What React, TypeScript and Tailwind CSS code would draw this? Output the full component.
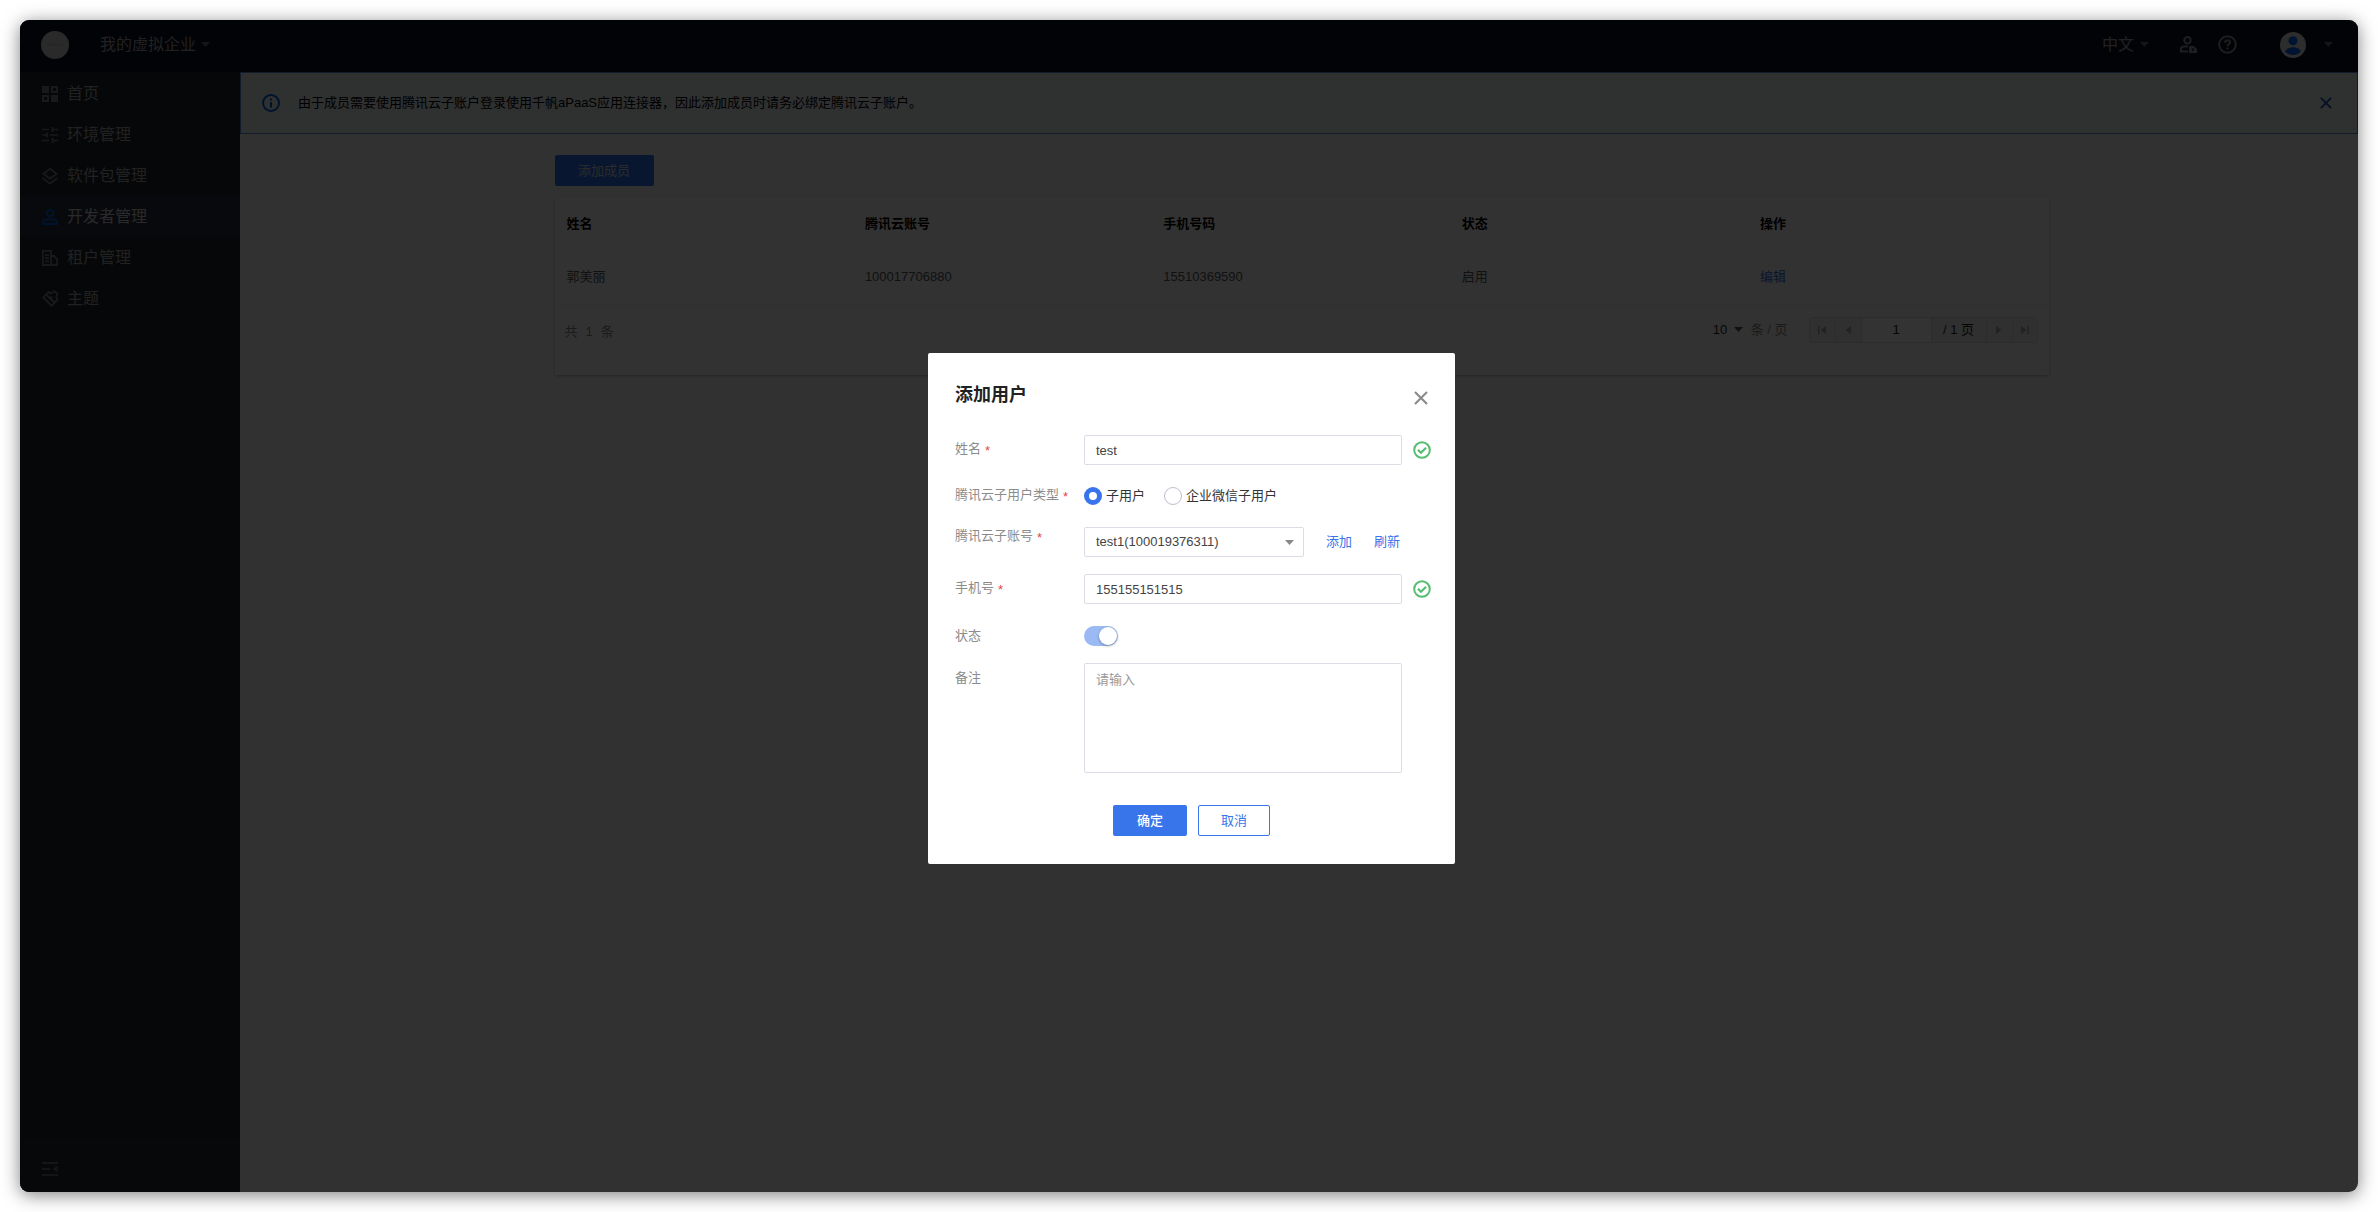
import type { ReactNode } from 'react';

type IconProps = { className?: string };

function Caret({ className = '' }: IconProps) {
  return (
    <svg className={`h-[5px] w-[9px] ${className}`} viewBox="0 0 10 6" preserveAspectRatio="none" fill="currentColor" aria-hidden="true">
      <path d="M0 0h10L5 6z" />
    </svg>
  );
}

function HomeIcon() {
  return (
    <svg className="size-4" viewBox="0 0 16 16" fill="none" stroke="currentColor" strokeWidth="2" aria-hidden="true">
      <path d="M0 0h7v7H0zM9 9h7v7H9z" fill="currentColor" stroke="none" />
      <path d="M10 1h5v5h-5zM1 10h5v5H1z" />
    </svg>
  );
}

function EnvIcon() {
  return (
    <svg className="size-4" viewBox="0 0 16 16" fill="none" stroke="currentColor" strokeWidth="1.7" aria-hidden="true">
      <path d="M0 2.500h7M10.500 2.500H16M10.500 0v5M0 8h5M5 5.500v5M8 8h8M0 13.500h7M10.500 13.500H16M10.500 11v5" />
    </svg>
  );
}

function LayersIcon() {
  return (
    <svg className="size-4" viewBox="0 0 16 16" fill="none" stroke="currentColor" strokeWidth="1.8" aria-hidden="true">
      <path d="M8 0.800l6.500 5L8 10.800 1.500 5.800z" />
      <path d="M0.600 10L8 15.600 15.400 10" />
    </svg>
  );
}

function PersonIcon() {
  return (
    <svg className="size-4" viewBox="0 0 16 16" fill="none" stroke="currentColor" strokeWidth="1.9" aria-hidden="true">
      <circle cx="8" cy="4" r="3.2" />
      <path d="M1 15.050v-1.600C1 11.200 4 10.200 8 10.200s7 1 7 3.250v1.600z" />
    </svg>
  );
}

function BuildingIcon() {
  return (
    <svg className="size-4" viewBox="0 0 16 16" fill="none" stroke="currentColor" strokeWidth="1.8" aria-hidden="true">
      <path d="M0.900 15.100V0.900h8.200v14.200M0.900 15.100h14.200V9.200L12 6H9.100M3 5.200h4M3 8.200h4M3 11.400h4" />
      <path d="M0 15.100h16" />
    </svg>
  );
}

function ThemeIcon() {
  return (
    <svg className="size-[17px]" viewBox="0 0 17 17" fill="none" stroke="currentColor" strokeWidth="1.8" strokeLinejoin="round" aria-hidden="true">
      <path d="M1.200 7.500L6.500 1.800l2.300 1.700L12.500 1.200l3 3-1.300 3 1.500 2.300-6 6.200z" />
      <path d="M4.500 5l8 7.500M8.300 6.500l2 1.800" />
    </svg>
  );
}

function CollapseIcon() {
  return (
    <svg className="size-4" viewBox="0 0 16 16" fill="none" stroke="currentColor" strokeWidth="1.8" aria-hidden="true">
      <path d="M0 2h16M0 8h8M0 14h16" />
      <path d="M15.500 4.800v6.400L10.500 8z" fill="currentColor" stroke="none" />
    </svg>
  );
}

function UserLockIcon() {
  return (
    <svg className="size-[17px]" viewBox="0 0 17 17" fill="none" stroke="currentColor" strokeWidth="2" aria-hidden="true">
      <circle cx="7.5" cy="4.2" r="3.2" />
      <path d="M8 10.500H4C2 10.500 1 11.500 1 13.200V15.500h7" />
      <path d="M9 10h5l3 3v4H9z" fill="currentColor" stroke="none" />
      <path d="M12.900 12.500v2.500" stroke="#0c1022" strokeWidth="1.4" />
    </svg>
  );
}

function HelpIcon() {
  return (
    <svg className="size-[19px]" viewBox="0 0 19 19" fill="none" stroke="currentColor" strokeWidth="2" aria-hidden="true">
      <circle cx="9.5" cy="9.5" r="8.3" />
      <path d="M7 7.700C7 6 8 5.200 9.500 5.200S12 6.100 12 7.500c0 1.600-2.500 1.700-2.500 3.500" />
      <path d="M9.500 12.400v1.800" />
    </svg>
  );
}

function AvatarIcon() {
  return (
    <svg className="size-[26px]" viewBox="0 0 26 26" aria-hidden="true">
      <circle cx="13" cy="13" r="13" fill="#e0e0e0" />
      <circle cx="13" cy="8.8" r="4.5" fill="#0062f0" />
      <path d="M5 19.500c1.500-3 4.500-4.200 8-4.200s6.500 1.200 8 4.200c-2 2.300-4.800 3.500-8 3.500s-6-1.200-8-3.500z" fill="#0062f0" />
    </svg>
  );
}

function InfoIcon() {
  return (
    <svg className="size-[18px]" viewBox="0 0 18 18" fill="none" stroke="currentColor" strokeWidth="2" aria-hidden="true">
      <circle cx="9" cy="9" r="8" />
      <path d="M9 8v5.500M9 4.500v2" />
    </svg>
  );
}

function CloseIcon({ className = '' }: IconProps) {
  return (
    <svg className={className} viewBox="0 0 14 14" fill="none" stroke="currentColor" strokeWidth="2.2" aria-hidden="true">
      <path d="M1 1l12 12M13 1L1 13" />
    </svg>
  );
}

function ValidIcon() {
  return (
    <svg className="ml-[11px] size-[18px] shrink-0 text-[#55bd70]" viewBox="0 0 18 18" fill="none" stroke="currentColor" strokeWidth="2" role="img" aria-label="校验通过">
      <circle cx="9" cy="9" r="7.8" />
      <path d="M5 8.800l2.900 2.900 5.200-5" strokeWidth="2.2" />
    </svg>
  );
}

const navItems: { label: string; icon: ReactNode; active?: boolean }[] = [
  { label: '首页', icon: <HomeIcon /> },
  { label: '环境管理', icon: <EnvIcon /> },
  { label: '软件包管理', icon: <LayersIcon /> },
  { label: '开发者管理', icon: <PersonIcon />, active: true },
  { label: '租户管理', icon: <BuildingIcon /> },
  { label: '主题', icon: <ThemeIcon /> },
];

function Header() {
  return (
    <header className="flex h-[52px] items-center bg-[#0c1022] pr-[25px] pb-[3px] pl-[21px] text-base text-[#a4a4a4]">
      <div className="flex size-[28px] items-center justify-center rounded-full bg-[#d0d0d0]">
        <span className="h-[3px] w-4 rounded-sm bg-[#c0c0c0]" />
      </div>
      <button type="button" className="ml-[31px] flex items-center gap-[5px]">
        我的虚拟企业
        <Caret className="text-[#686868]" />
      </button>
      <button type="button" className="ml-auto flex items-center gap-[6px]">
        中文
        <Caret className="text-[#686868]" />
      </button>
      <button type="button" aria-label="账号安全" className="ml-[31px] text-[#949494]">
        <UserLockIcon />
      </button>
      <button type="button" aria-label="帮助" className="ml-[21px] text-[#949494]">
        <HelpIcon />
      </button>
      <button type="button" aria-label="用户菜单" className="ml-[43px] flex items-center gap-[18px]">
        <AvatarIcon />
        <Caret className="text-[#686868]" />
      </button>
    </header>
  );
}

function Sidebar() {
  return (
    <aside className="flex w-[220px] shrink-0 flex-col bg-[#1e2529]">
      <nav className="flex-1 pt-px">
        {navItems.map((item) => (
          <a
            key={item.label}
            href="#"
            aria-current={item.active ? 'page' : undefined}
            className={
              item.active
                ? 'flex h-[41px] items-center bg-[#2a3140] pl-[22px] text-base text-[#cfcfcf]'
                : 'flex h-[41px] items-center pl-[22px] text-base text-[#a4a4a4]'
            }
          >
            <span className={item.active ? 'w-[25px] text-[#0062e0]' : 'w-[25px] text-[#7c7c7c]'}>{item.icon}</span>
            {item.label}
          </a>
        ))}
      </nav>
      <div className="flex h-[54px] items-center bg-[#262b30] pt-2 pl-[22px] text-[#6a6a6a]">
        <button type="button" aria-label="收起菜单">
          <CollapseIcon />
        </button>
      </div>
    </aside>
  );
}

const columns = ['姓名', '腾讯云账号', '手机号码', '状态', '操作'];

const pagerButton = 'flex w-[26px] items-center justify-center border-r border-[#dcdcdc] text-[#aaa]';

function Pager() {
  return (
    <div className="flex h-[26px] items-stretch rounded-sm border border-[#dcdcdc] bg-[#f0f0f0] text-[#222]">
      <button type="button" aria-label="第一页" className={pagerButton}>
        <svg className="size-2" viewBox="0 0 8 8" fill="currentColor"><path d="M0 0h1.500v8H0zM8 0v8L2.500 4z" /></svg>
      </button>
      <button type="button" aria-label="上一页" className={pagerButton}>
        <svg className="size-2" viewBox="0 0 8 8" fill="currentColor"><path d="M7 0v8L1.500 4z" /></svg>
      </button>
      <input aria-label="页码" defaultValue="1" className="w-[70px] border-r border-[#dcdcdc] bg-white text-center" />
      <span className="flex w-[55px] items-center justify-center border-r border-[#dcdcdc]">/ 1 页</span>
      <button type="button" aria-label="下一页" className={pagerButton}>
        <svg className="size-2" viewBox="0 0 8 8" fill="currentColor"><path d="M1 0v8L6.500 4z" /></svg>
      </button>
      <button type="button" aria-label="最后一页" className="flex w-6 items-center justify-center text-[#aaa]">
        <svg className="size-2" viewBox="0 0 8 8" fill="currentColor"><path d="M8 0H6.500v8H8zM0 0v8l5.500-4z" /></svg>
      </button>
    </div>
  );
}

function Members() {
  return (
    <section className="mx-auto w-full max-w-[1499px] pt-[21px] pl-[5px]">
      <button type="button" className="h-[31px] w-[99px] rounded-xs bg-[#2a72ea] text-[#d8d8d8]">
        添加成员
      </button>
      <div className="mt-[11px] rounded-xs bg-[#fafafa] px-px pb-8 shadow-[0_1px_3px_rgba(0,0,0,0.25)]">
        <table className="w-full table-fixed text-left">
          <thead>
            <tr className="h-[53px]">
              {columns.map((name) => (
                <th key={name} scope="col" className="px-[11px] font-bold text-black">
                  {name}
                </th>
              ))}
            </tr>
          </thead>
          <tbody>
            <tr className="h-[55px] border-b border-[#eaeaea] text-[#555]">
              <td className="px-[11px]">郭美丽</td>
              <td className="px-[11px]">100017706880</td>
              <td className="px-[11px]">15510369590</td>
              <td className="px-[11px]">启用</td>
              <td className="px-[11px]">
                <a href="#" className="text-[#3a6fe0]">编辑</a>
              </td>
            </tr>
          </tbody>
        </table>
        <div className="flex items-center pt-[11px] pr-[10px] pl-[9px] text-[#888]">
          <p className="mr-auto flex gap-2 pt-1">
            <span>共</span>
            <span>1</span>
            <span>条</span>
          </p>
          <label className="mr-[21px] flex items-center">
            <span className="relative mr-[8px] flex items-center">
              <select aria-label="每页条数" defaultValue="10" className="w-[30px] appearance-none text-[#222]">
                <option>10</option>
                <option>20</option>
              </select>
              <Caret className="pointer-events-none absolute right-0 text-[#555]" />
            </span>
            条 / 页
          </label>
          <Pager />
        </div>
      </div>
    </section>
  );
}

const field = 'h-[30px] rounded-xs border border-[#dcdce6] bg-white text-[#444]';

function Row({
  label,
  htmlFor,
  required,
  className,
  labelClassName = '',
  children,
}: {
  label: string;
  htmlFor?: string;
  required?: boolean;
  className: string;
  labelClassName?: string;
  children: ReactNode;
}) {
  return (
    <div className={`flex ${className}`}>
      <label htmlFor={htmlFor} className={`flex w-[129px] shrink-0 whitespace-nowrap text-[#8c8c8c] ${labelClassName}`}>
        {label}
        {required && <span className="ml-1 pt-[2px] text-[#e54545]">*</span>}
      </label>
      {children}
    </div>
  );
}

const radio =
  'mr-1 size-[18px] appearance-none rounded-full border border-[#b8bfcc] bg-white checked:border-[5px] checked:border-[#3875ea]';

function AddUserDialog() {
  return (
    <div
      role="dialog"
      aria-modal="true"
      aria-labelledby="dialog-title"
      className="w-[527px] rounded-xs bg-white pt-[27px] pr-[22px] pb-7 pl-[27px]"
    >
      <div className="flex items-end justify-between">
        <h2 id="dialog-title" className="text-lg leading-[30px] font-bold text-[#222]">
          添加用户
        </h2>
        <button type="button" aria-label="关闭" className="flex size-6 items-center justify-center text-[#8c8c8c]">
          <CloseIcon className="size-[14px]" />
        </button>
      </div>
      <form className="mt-[25px]">
        <Row label="姓名" htmlFor="name" required className="items-center">
          <input id="name" defaultValue="test" className={`${field} w-[318px] px-[11px]`} />
          <ValidIcon />
        </Row>
        <Row label="腾讯云子用户类型" required className="mt-4 h-[30px] items-center">
          <div className="flex gap-[19px] text-[#333]">
            <label className="flex items-center">
              <input type="radio" name="type" defaultChecked className={radio} />
              子用户
            </label>
            <label className="flex items-center">
              <input type="radio" name="type" className={radio} />
              企业微信子用户
            </label>
          </div>
        </Row>
        <Row label="腾讯云子账号" htmlFor="account" required className="mt-4 items-start">
          <div className="flex items-center">
            <div className="relative flex items-center">
              <select id="account" className={`${field} w-[220px] appearance-none pr-8 pl-[11px]`}>
                <option>test1(100019376311)</option>
              </select>
              <Caret className="pointer-events-none absolute right-[10px] text-[#888]" />
            </div>
            <a href="#" className="ml-[22px] text-[#3875ea]">添加</a>
            <a href="#" className="ml-[22px] text-[#3875ea]">刷新</a>
          </div>
        </Row>
        <Row label="手机号" htmlFor="phone" required className="mt-[17px] items-center">
          <input id="phone" defaultValue="155155151515" className={`${field} w-[318px] px-[11px]`} />
          <ValidIcon />
        </Row>
        <Row label="状态" htmlFor="enabled" className="mt-[17px] h-[30px] items-center">
          <input
            id="enabled"
            type="checkbox"
            role="switch"
            defaultChecked
            className="flex h-5 w-[34px] appearance-none items-center rounded-full bg-[#9bbaf4] p-px before:size-[18px] before:rounded-full before:bg-white before:shadow-[0_1px_3px_rgba(0,0,0,0.3)] before:content-[''] checked:justify-end"
          />
        </Row>
        <Row label="备注" htmlFor="remark" className="mt-3 items-start" labelClassName="pt-[6px]">
          <textarea
            id="remark"
            placeholder="请输入"
            className="h-[110px] w-[318px] resize-none rounded-xs border border-[#dcdce6] px-[11px] py-[7px] placeholder:text-[#999]"
          />
        </Row>
        <div className="mt-8 flex justify-center gap-[11px] pr-[5px]">
          <button type="submit" className="h-[31px] w-[74px] rounded-xs bg-[#3875ea] font-medium text-white">
            确定
          </button>
          <button type="button" className="h-[31px] w-[72px] rounded-xs border border-[#3875ea] text-[#3875ea]">
            取消
          </button>
        </div>
      </form>
    </div>
  );
}

export default function App() {
  return (
    <div className="flex min-h-screen bg-white p-5 font-['Liberation_Sans','Noto_Sans_CJK_SC',sans-serif] text-[13px] leading-[18px]">
      <div className="relative flex flex-1 flex-col overflow-hidden rounded-[9px] shadow-[0_3px_18px_rgba(0,0,0,0.5)]">
        <Header />
        <div className="flex flex-1">
          <Sidebar />
          <main className="min-w-0 flex-1 bg-[#f4f4f4]">
            <div className="flex h-[62px] items-center border border-[#5c86cc] bg-[#e8edf1] pr-[25px] pb-px pl-[21px] text-black">
              <span className="text-[#0062e0]">
                <InfoIcon />
              </span>
              <p className="ml-[18px] flex-1">
                由于成员需要使用腾讯云子账户登录使用千帆aPaaS应用连接器，因此添加成员时请务必绑定腾讯云子账户。
              </p>
              <button type="button" aria-label="关闭提示" className="text-[#1f55bb]">
                <CloseIcon className="size-3" />
              </button>
            </div>
            <Members />
          </main>
        </div>
        <div className="absolute inset-0 grid place-items-center bg-black/80 pt-[5px] pl-[5px]">
          <AddUserDialog />
        </div>
      </div>
    </div>
  );
}
